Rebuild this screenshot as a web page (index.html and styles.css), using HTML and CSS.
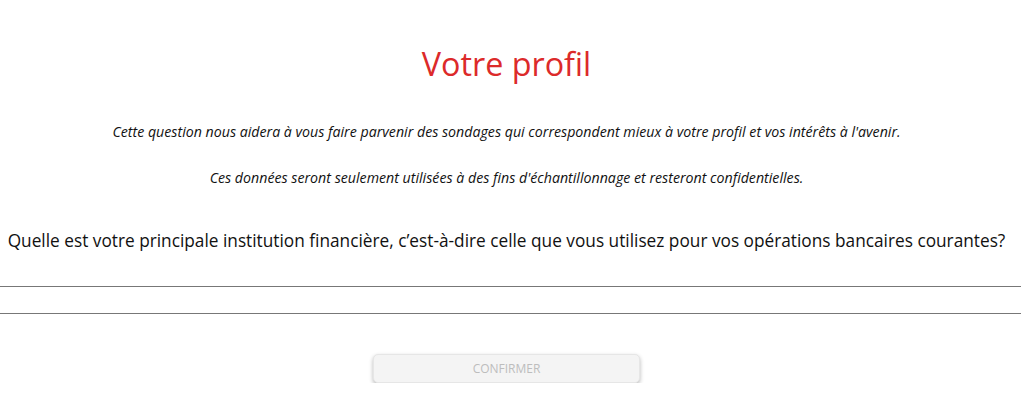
FILE: index.html
```html
<!DOCTYPE html>
<html lang="fr">
<head>
  <meta charset="UTF-8" />
  <title>Votre profil</title>
  <link rel="stylesheet" href="styles.css">
</head>
<body>
  <div class="profile">
    <h1>Votre profil</h1>
    <p class="note">Cette question nous aidera à vous faire parvenir des sondages qui correspondent mieux à votre profil et vos intérêts à l'avenir.</p>
    <p class="note">Ces données seront seulement utilisées à des fins d'échantillonnage et resteront confidentielles.</p>
    <p class="question">Quelle est votre principale institution financière, c’est-à-dire celle que vous utilisez pour vos opérations bancaires courantes?</p>
    <div class="answer">
      <input type="text" class="answer-input">
    </div>
    <button class="confirm" disabled>CONFIRMER</button>
  </div>
</body>
</html>
```

FILE: styles.css
```css
* {
  margin: 0;
  padding: 0;
  box-sizing: border-box;
}

body {
  background: #fff;
  font-family: 'Open Sans', 'Noto Sans', sans-serif;
  color: #111;
}

.profile {
  display: flex;
  flex-direction: column;
  align-items: center;
  padding-top: 39px;
  padding-right: 8px;
}

h1 {
  color: #dc2a2a;
  font-size: 32.3px;
  font-weight: 400;
  line-height: 48px;
  margin-bottom: 36px;
}

.note {
  font-style: italic;
  font-size: 14.2px;
  line-height: 18px;
  margin-bottom: 28px;
}

.question {
  font-size: 17.25px;
  line-height: 24px;
  margin-top: 14px;
  margin-bottom: 33px;
}

.answer {
  align-self: stretch;
  margin-right: -8px;
  border-top: 1px solid #777;
  border-bottom: 1px solid #777;
  height: 28px;
}

.answer-input {
  width: 100%;
  height: 100%;
  border: none;
  outline: none;
  background: transparent;
}

.confirm {
  margin-top: 40px;
  width: 267px;
  height: 29px;
  background: #f4f4f4;
  border: 1px solid #e6e6e6;
  border-radius: 5px;
  box-shadow: 0 2px 4px rgba(0,0,0,0.28);
  color: #bdbdbd;
  font-family: 'Open Sans', sans-serif;
  font-size: 12px;
}
```
